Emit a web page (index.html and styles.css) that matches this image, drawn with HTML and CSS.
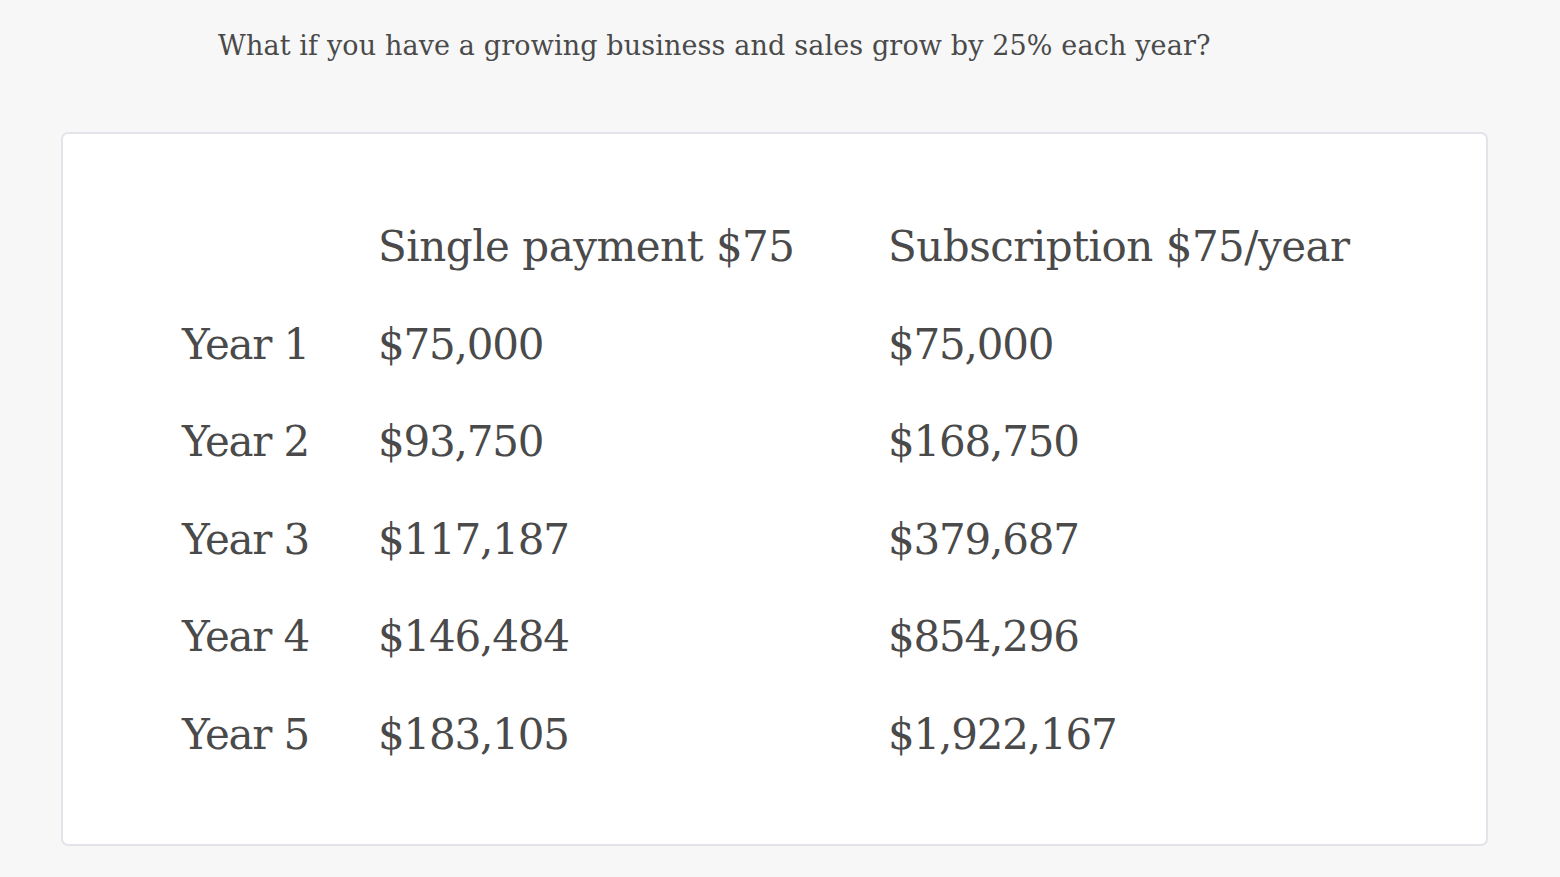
FILE: index.html
```html
<!DOCTYPE html>
<html>
<head>
<meta charset="utf-8">
<link rel="stylesheet" href="styles.css">
</head>
<body>
<div class="page">
  <p class="intro">What if you have a growing business and sales grow by 25% each year?</p>
  <div class="card">
    <div class="table">
      <div class="cell"></div>
      <div class="cell head">Single payment $75</div>
      <div class="cell head">Subscription $75/year</div>
      <div class="cell">Year 1</div><div class="cell">$75,000</div><div class="cell">$75,000</div>
      <div class="cell">Year 2</div><div class="cell">$93,750</div><div class="cell">$168,750</div>
      <div class="cell">Year 3</div><div class="cell">$117,187</div><div class="cell">$379,687</div>
      <div class="cell">Year 4</div><div class="cell">$146,484</div><div class="cell">$854,296</div>
      <div class="cell">Year 5</div><div class="cell">$183,105</div><div class="cell">$1,922,167</div>
    </div>
  </div>
</div>
</body>
</html>
```
FILE: styles.css
```css
html, body {
  margin: 0;
  padding: 0;
  background: #f7f7f7;
}
.page {
  width: 1560px;
  height: 877px;
  font-family: "DejaVu Serif", serif;
  color: #4a4a4a;
  padding-top: 1px;
  box-sizing: border-box;
}
.intro {
  margin: 27px 0 0 218px;
  font-size: 27px;
  line-height: 36px;
  letter-spacing: 0.13px;
}
.card {
  margin: 68px 0 0 61px;
  width: 1427px;
  height: 714px;
  box-sizing: border-box;
  background: #ffffff;
  border: 2px solid #e3e3ea;
  border-radius: 7px;
  padding: 78px 0 0 119px;
}
.table {
  display: grid;
  grid-template-columns: 196px 510px auto;
  grid-auto-rows: 97.5px;
  font-size: 42px;
  line-height: 70px;
  letter-spacing: -1.2px;
}
.cell {
  white-space: nowrap;
}
.head {
  letter-spacing: -0.5px;
}
```
